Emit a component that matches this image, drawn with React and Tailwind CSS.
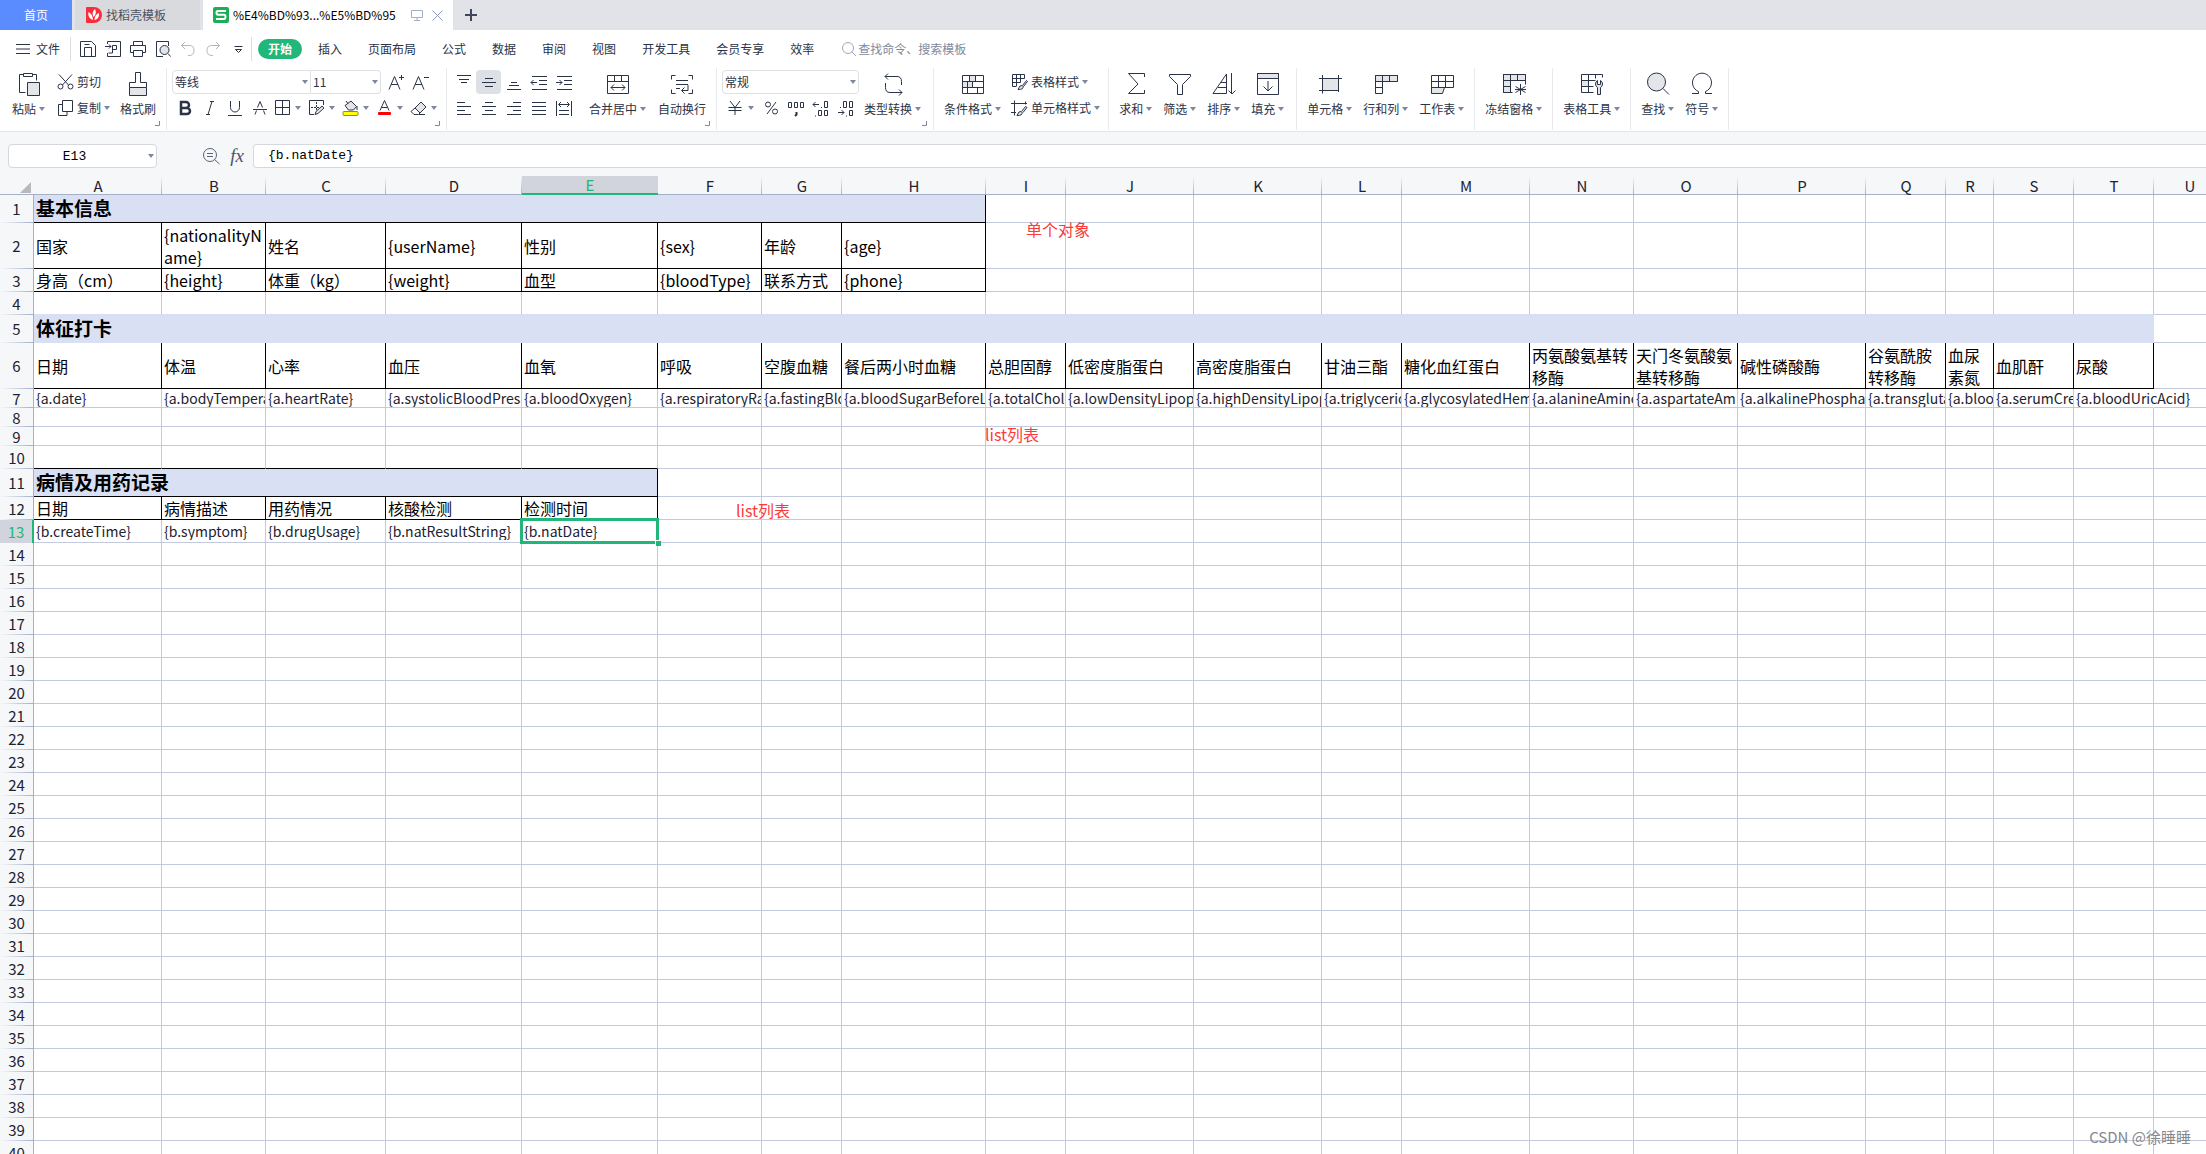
import React, { useState } from 'react';
import clsx from 'clsx';

// ---------- Icons ----------

const Svg = ({ w = 16, h = w, children }) => (
  <svg width={w} height={h} viewBox={`0 0 ${w} ${h}`} fill="none" stroke="#2b3346" strokeWidth="1" className="shrink-0" aria-hidden="true">
    {children}
  </svg>
);

const Caret = ({ className }) => (
  <svg width="6" height="4" viewBox="0 0 6 4" className={clsx('shrink-0 fill-[#7d879f]', className)} aria-hidden="true">
    <path d="M0 0h6L3 4z" />
  </svg>
);

const Launcher = () => (
  <svg width="5" height="5" viewBox="0 0 5 5" fill="none" stroke="#7d879f" className="absolute bottom-1 right-1.5" aria-hidden="true">
    <path d="M4.5 0v4.5H0" />
  </svg>
);

const GRAY = '#e4e5e9';

const icons = {
  paste: (
    <Svg w={24}>
      <path d="M8.5 20.5h-6v-18h4M15.500 2.500h4v6M6.500 1.500h9v3h-9z" />
      <path d="M10.500 10.500h12v13h-12z" fill={GRAY} />
    </Svg>
  ),
  cut: (
    <Svg w={17} h={16}>
      <path d="M2 0.500l9.500 10.500M15 0.500L5.500 11" />
      <circle cx="3.500" cy="12.500" r="2.500" />
      <circle cx="13.500" cy="12.500" r="2.500" />
    </Svg>
  ),
  copy: (
    <Svg w={17} h={16}>
      <path d="M5.500 0.500h10v11h-10z" />
      <path d="M5.500 4.500h-4v11h8.500v-4" />
    </Svg>
  ),
  brush: (
    <Svg w={24}>
      <path d="M3.500 15.500h17v8h-17z" fill={GRAY} />
      <path d="M3.500 15.500v-5h6v-10h5v10h6v5" />
    </Svg>
  ),
  merge: (
    <Svg w={24}>
      <path d="M1.500 3.500h21v18h-21zM1.500 9.500h21M8.500 3.500v6M15.500 3.500v6M5 15.500h14M8 12.500l-3 3 3 3M16 12.500l3 3-3 3" />
    </Svg>
  ),
  wrap: (
    <Svg w={24}>
      <path d="M5.500 3.500h-4v4M18.500 3.500h4v4M5.500 21.500h-4v-4M18.500 21.500h4v-4M6 8.500h12M6 12.500h12M6 16.500h4M18 13v5.500h-6M14.500 15.500l-3 3 3 3" />
    </Svg>
  ),
  convert: (
    <Svg w={24}>
      <path d="M4 4.500h12q4.500 0 4.500 5V13M7 1.500l-3 3 3 3M4.500 11v4.500q0 5 4.500 5h12M18 17.500l3 3-3 3" />
    </Svg>
  ),
  condition: (
    <Svg w={24}>
      <path d="M8.500 3.500h6v6h-6zM1.500 9.500h10v6h-10z" fill={GRAY} stroke="none" />
      <path d="M1.500 3.500h21v18h-21zM1.500 9.500h21M1.500 15.500h21M8.500 3.500v6M14.500 3.500v6M6.500 9.500v12M11.500 9.500v6M16.500 15.500v6" />
    </Svg>
  ),
  tableStyle: (
    <Svg w={17} h={17}>
      <path d="M5 12.500H1.500v-12h12v4M1.500 4.500h12M1.500 8.500h8M5.500 0.500v12M9.500 0.500v8" />
      <path d="M7 15.500q2-5 4-4l1 1q1 3-5 3zM11.500 11.500l4-5 1 1-4 5" fill={GRAY} />
    </Svg>
  ),
  cellStyle: (
    <Svg w={17} h={17}>
      <path d="M0 3.500h16M3.500 0.500v15M0 12.500h5M14.500 1.500v3" />
      <path d="M6 15.500q2-5 4-4l1 1q1 3-5 3zM10.500 11.500l4-5 1.500 1-4 5" fill={GRAY} />
    </Svg>
  ),
  sum: (
    <Svg w={24}>
      <path d="M20.500 5v-3.500h-16L14 12 4.500 21.500h16V18" />
    </Svg>
  ),
  filter: (
    <Svg w={24}>
      <path d="M1.500 2.500h21v2l-8 8v10h-5v-10l-8-8z" />
    </Svg>
  ),
  sort: (
    <Svg w={24}>
      <path d="M14.500 2v19.500M1 21.500L14.500 2M9 10.500h5.500M6 15.500h8.500M1 21.500h13.500M19.500 1v21M16.500 18.500l3.500 3.500 3.500-3.500" />
    </Svg>
  ),
  fill: (
    <Svg w={24}>
      <path d="M1.500 1.500h21v5h-21z" fill={GRAY} />
      <path d="M1.500 1.500h21v21h-21zM12 9v10M7.500 14.500L12 19l4.500-4.500" />
    </Svg>
  ),
  cell: (
    <Svg w={24}>
      <path d="M4.500 6.500h16v12h-16z" fill={GRAY} />
      <path d="M1 6.500h23M1 18.500h16M4.500 3v18.500M20.500 3v12.500M20.500 17.500v2.500" />
    </Svg>
  ),
  rowCol: (
    <Svg w={24}>
      <path d="M1.500 3.500h22v6h-22z" fill={GRAY} />
      <path d="M1.500 3.500h22v6h-15v12h-7zM8.500 3.500v6h-7M15.500 3.500v6M1.500 15.500h7" />
    </Svg>
  ),
  sheet: (
    <Svg w={24}>
      <path d="M1.500 15.500h13l-2 6h-11z" fill={GRAY} />
      <path d="M1.500 3.500h22v12h-22zM1.500 9.500h22M8.500 3.500v12M15.500 3.500v12" />
    </Svg>
  ),
  freeze: (
    <Svg w={24}>
      <path d="M1.500 2.500h22v6h-15v12h-7z" fill={GRAY} />
      <path d="M1.500 2.500h22v10M1.500 8.500h22M8.500 2.500v18H1.500v-18M15.500 2.500v6M1.500 14.500h7M8.500 20.500h2M18.500 12v11M13.500 14.500l10 6M23.500 14.500l-10 6M13 17.500h11" />
    </Svg>
  ),
  tableTool: (
    <Svg w={24}>
      <path d="M1.500 8.500h7v6h-7z" fill={GRAY} />
      <path d="M22.500 5.500v-3h-21v18h12M1.500 8.500h14M1.500 14.500h12M8.500 2.500v18M15.500 2.500v4" />
      <path d="M17.500 22.500v-7q-2-1-2-3.500t2-3.500v4h3v-4q2 1 2 3.500t-2 3.500v7z" fill={GRAY} />
    </Svg>
  ),
  find: (
    <Svg w={24}>
      <circle cx="10.500" cy="10" r="9" fill={GRAY} />
      <path d="M17 16.500l6 6" />
    </Svg>
  ),
  symbol: (
    <Svg w={24}>
      <path d="M2 21.500h6.500v-2A9.500 9.500 0 1 1 15.500 19.500v2H22" />
    </Svg>
  ),
};

const fontIcons = {
  borders: (
    <Svg w={17} h={16}>
      <path d="M1.500 0.500h14v14h-14zM8.500 0.500v14M1.500 7.500h14" />
    </Svg>
  ),
  drawBorder: (
    <Svg w={17} h={16}>
      <path d="M15.500 5v-4.500h-14v14H6" />
      <path d="M3 7.500h10M8.500 2v10" strokeDasharray="2 1" />
      <path d="M7 14.500l1-3 6-5.500 2 2-6 5.500z" fill={GRAY} />
    </Svg>
  ),
  bucket: (
    <Svg w={17} h={16}>
      <path d="M3 5.500L9 1l5.500 5.500-3 3.500h-5zM6 3.500L4 1" fill={GRAY} />
      <path d="M15 6v4" />
      <rect x="1" y="11.500" width="15" height="4" rx="1" fill="#ffff00" stroke="#8a8a3a" />
    </Svg>
  ),
  fontColor: (
    <Svg w={17} h={16}>
      <path d="M4 10.500L8.500 0.500 13 10.500M5.500 7.500h6" />
      <rect x="2" y="12" width="13" height="3" rx="1" fill="#ff0000" stroke="none" />
    </Svg>
  ),
  eraser: (
    <Svg w={17} h={16}>
      <path d="M5 8l6-6 5 5-6 6z" fill={GRAY} />
      <path d="M5 8l-4 3.500 3 3h4.500L10 13M9 14.500h6" />
    </Svg>
  ),
};

const alignIcons = [
  ['顶端对齐', 'M2 1.500h14M4 5.500h10M6 8.500h6'],
  ['垂直居中', 'M5 4.500h8M2 8.500h14M5 12.500h8'],
  ['底端对齐', 'M6 8.500h6M4 11.500h10M2 15.500h14'],
  ['减少缩进', 'M2 2.500h15M9 6.500h8M9 10.500h8M2 15.500h15M1 8.500h6M3.500 6L1 8.500 3.500 11'],
  ['增加缩进', 'M2 2.500h15M9 6.500h8M9 10.500h8M2 15.500h15M1 8.500h6M4.500 6L7 8.500 4.500 11'],
  ['左对齐', 'M2 2.500h8M2 6.500h14M2 10.500h8M2 14.500h14'],
  ['水平居中', 'M5 2.500h8M2 6.500h14M5 10.500h8M2 14.500h14'],
  ['右对齐', 'M8 2.500h8M2 6.500h14M8 10.500h8M2 14.500h14'],
  ['两端对齐', 'M2 2.500h14M2 6.500h14M2 10.500h14M2 14.500h14'],
  ['分散对齐', 'M1.500 1v15M16.500 1v15M4 4.500h10M6 2L3.500 4.500 6 7M12 2l2.500 2.500L12 7M4 10.500h10M4 14.500h10'],
];

// ---------- Ribbon building blocks ----------

const BigButton = ({ icon, label, caret = true }) => (
  <button className="flex flex-col items-center gap-1">
    {icons[icon]}
    <span className="flex items-center gap-[3px] leading-[18px]">
      {label}
      {caret && <Caret />}
    </span>
  </button>
);

const SmallButton = ({ icon, label, caret = true }) => (
  <button className="flex h-[24px] items-center gap-[3px]">
    {icons[icon]}
    {label}
    {caret && <Caret />}
  </button>
);

const Group = ({ className = 'px-[10px]', launcher, children }) => (
  <div className={clsx('relative flex h-[62px] shrink-0 items-start border-r border-[#e9eaee]', className)}>
    {children}
    {launcher && <Launcher />}
  </div>
);

const Dropdown = ({ label, value, className }) => (
  <div className="relative flex items-center">
    <select aria-label={label} className={clsx('h-[24px] appearance-none border-[#dfe1e6] bg-white pl-[2px] text-[12px]', className)}>
      <option>{value}</option>
    </select>
    <Caret className="pointer-events-none absolute right-[3px]" />
  </div>
);

const TabBar = () => (
  <div className="flex h-[30px] shrink-0 items-stretch gap-[3px] bg-[#e2e3e8] text-[12px]">
    <button className="w-[72px] bg-[#5b8cff] text-white">首页</button>
    <button className="flex w-[125px] items-center gap-1 bg-[#d9dadd] pl-[11px] text-[#4b5263]">
      <svg width="16" height="16" viewBox="0 0 16 16" aria-hidden="true">
        <path d="M1 0h7a8 8 0 0 1 0 16H1a1 1 0 0 1-1-1V1a1 1 0 0 1 1-1z" fill="#fb2c3c" />
        <path d="M7 13C2.500 11.500 2 8 2.500 5 5 6.500 7 9 7 13zM7.500 10C5.800 7 6.500 4 9 2c1.500 3 1 6-1.500 8zM8.500 13c0-3.500 1.500-6 4.500-7 .5 3.500-1 6.300-4.500 7z" fill="#fff" />
      </svg>
      找稻壳模板
    </button>
    <div className="flex w-[250px] items-center bg-white pl-[10px]">
      <svg width="16" height="16" viewBox="0 0 16 16" className="mr-1" aria-hidden="true">
        <rect width="16" height="16" rx="2" fill="#1aae57" />
        <path d="M13 4H5Q3.500 4 3.500 5.800T5 7.700h6Q12.500 7.700 12.500 9.800T11 12H3" fill="none" stroke="#fff" strokeWidth="2" />
      </svg>
      <span className="w-[178px] whitespace-nowrap text-black">%E4%BD%93...%E5%BD%95</span>
      <svg width="12" height="12" viewBox="0 0 12 12" fill="none" stroke="#a3aec8" aria-hidden="true">
        <path d="M.5 1.500h11v7H.5zM6 8.500v3M3 11.500h6" />
      </svg>
      <button aria-label="关闭" className="ml-[9px]">
        <svg width="11" height="11" viewBox="0 0 11 11" fill="none" stroke="#8f9bb8">
          <path d="M.5.5l10 10M10.500.5l-10 10" />
        </svg>
      </button>
    </div>
    <button aria-label="新建" className="ml-[9px]">
      <svg width="12" height="12" viewBox="0 0 12 12" stroke="#3f475c" strokeWidth="2">
        <path d="M6 0v12M0 6h12" />
      </svg>
    </button>
  </div>
);

const menus = ['开始', '插入', '页面布局', '公式', '数据', '审阅', '视图', '开发工具', '会员专享', '效率'];

const quickTools = [
  ['保存', <path d="M.5.5h11l4 4v11H.5zM4.500 15v-8.500h7V15M4.500 3.500h5" />],
  ['输出为PDF', <path d="M2.500 3V.5h13v15h-13V12M0 5.500h6M4 3.500l2 2-2 2M7.500 4.500h4v4h-4zM7.500 8v4h-4" />],
  ['打印', <path d="M3.500 4.500v-4h9v4M3.500 11.500h-3v-7h15v7h-3M3.500 9.500h9v6h-9z" />],
  ['打印预览', <><path d="M8 15.500H1.500V.5h12V5M13 12.500l2.500 3" /><circle cx="9.500" cy="9" r="4.500" fill={GRAY} /></>],
  ['撤销', <path d="M5 1L1.500 4.500 5 8M1.500 4.500h8q4.500 0 4.500 5t-5 5H8" stroke="#b4b6bb" />],
  ['恢复', <path d="M11 1l3.500 3.500L11 8M14.500 4.500h-8q-4.500 0-4.500 5t5 5h1" stroke="#b4b6bb" />],
  ['更多', <path d="M4.500 5.500h8M5.500 8.500h6l-3 3z" />],
];

const MenuBar = () => {
  const [active, setActive] = useState('开始');
  return (
    <div className="flex h-[38px] shrink-0 items-center text-[12px]">
      <button className="flex items-center gap-[6px] pl-4 pr-[10px]">
        <svg width="14" height="10" viewBox="0 0 14 10" stroke="#2b3346" aria-hidden="true">
          <path d="M0 .5h14M0 5h14M0 9.500h14" />
        </svg>
        文件
      </button>
      <div className="flex h-6 items-center gap-[9px] border-x border-[#dcdee4] pl-[9px] pr-[5px]">
        {quickTools.map(([label, path]) => (
          <button key={label} aria-label={label}>
            <Svg w={16}>{path}</Svg>
          </button>
        ))}
      </div>
      <nav className="ml-[6px] flex gap-[6px]">
        {menus.map((m) => (
          <button
            key={m}
            onClick={() => setActive(m)}
            className={clsx('h-5 rounded-full px-[10px]', active === m && 'bg-[#21b77b] font-bold text-white')}
          >
            {m}
          </button>
        ))}
      </nav>
      <label className="ml-[18px] flex items-center gap-[2px]">
        <svg width="14" height="14" viewBox="0 0 14 14" fill="none" stroke="#a0a8bd" aria-hidden="true">
          <circle cx="6" cy="6" r="5.500" />
          <path d="M10 10l4 4" />
        </svg>
        <input aria-label="查找命令" placeholder="查找命令、搜索模板" className="w-[140px] outline-none placeholder:text-[#8089a0]" />
      </label>
    </div>
  );
};

const Ribbon = () => (
  <div className="flex h-[64px] shrink-0 items-start border-b border-[#e3e5e9] text-[12px] leading-[18px]">
    <Group launcher className="pr-[10px] pl-[12px]">
      <div className="flex pt-1">
        <BigButton icon="paste" label="粘贴" />
      </div>
      <div className="ml-[12px] mr-[10px] flex flex-col gap-[2px] pt-[2px]">
        <SmallButton icon="cut" label="剪切" caret={false} />
        <SmallButton icon="copy" label="复制" />
      </div>
      <div className="flex pt-1">
        <BigButton icon="brush" label="格式刷" caret={false} />
      </div>
    </Group>

    <Group launcher className="flex-col gap-[2px] pt-[2px] pr-[4px] pl-[5px]">
      <div className="flex items-center">
        <Dropdown label="字体" value="等线" className="w-[139px] rounded-l-sm border" />
        <Dropdown label="字号" value="11" className="w-[70px] rounded-r-sm border-y border-r" />
        <button aria-label="增大字号" className="ml-[3px] flex w-[24px] justify-center">
          <Svg w={17} h={17}>
            <path d="M1 15.500L6.500 2.500 12 15.500M3 10.500h7M11 3.500h5M13.500 1v5" />
          </Svg>
        </button>
        <button aria-label="减小字号" className="flex w-[24px] justify-center">
          <Svg w={17} h={17}>
            <path d="M1 15.500L6.500 2.500 12 15.500M3 10.500h7M12 3.500h5" />
          </Svg>
        </button>
      </div>
      <div className="flex h-[24px] items-center">
        <button aria-label="加粗" className="flex w-[25px] justify-center">
          <Svg w={16}>
            <path d="M4 2h5a3 3 0 0 1 0 6H4zM4 8h6a3 3 0 0 1 0 6H4z" strokeWidth="2.500" />
          </Svg>
        </button>
        <button aria-label="倾斜" className="flex w-[25px] justify-center">
          <Svg w={16}>
            <path d="M8 1.500h4M4 14.500h4M10 1.500l-4 13" />
          </Svg>
        </button>
        <button aria-label="下划线" className="flex w-[25px] justify-center">
          <Svg w={16}>
            <path d="M3.500 1v6.500a4.500 4.500 0 0 0 9 0V1M1 15.500h14" />
          </Svg>
        </button>
        <button aria-label="删除线" className="flex w-[25px] justify-center">
          <Svg w={16}>
            <path d="M3 14.500l1.500-4M5.500 7.500l2.500-6 2.500 6M11.500 10.500l1.500 4M1 9.500h14" />
          </Svg>
        </button>
        {[['边框', 'borders'], ['绘制边框', 'drawBorder'], ['填充颜色', 'bucket'], ['字体颜色', 'fontColor'], ['清除', 'eraser']].map(([label, icon]) => (
          <button key={icon} aria-label={label} className="flex w-[34px] items-center gap-[4px] pl-[2px]">
            {fontIcons[icon]}
            <Caret />
          </button>
        ))}
      </div>
    </Group>

    <Group launcher className="pr-[10px] pl-[4px]">
      <div className="mr-[13px] grid grid-cols-5 gap-y-[2px] pt-[2px]">
        {alignIcons.map(([label, d], i) => (
          <button key={label} aria-label={label} className={clsx('flex h-[24px] w-[25px] items-center justify-center rounded-sm', i === 1 && 'bg-[#dde1e6]')}>
            <Svg w={18} h={17}>
              <path d={d} />
            </Svg>
          </button>
        ))}
      </div>
      <div className="flex gap-3 pt-1">
        <BigButton icon="merge" label="合并居中" />
        <BigButton icon="wrap" label="自动换行" caret={false} />
      </div>
    </Group>

    <Group launcher className="pr-[12px] pl-[5px]">
      <div className="mr-[5px] flex flex-col gap-[2px] pt-[2px]">
        <Dropdown label="数字格式" value="常规" className="w-[137px] rounded-sm border" />
        <div className="flex h-[24px] items-center">
          <button aria-label="货币" className="flex w-[36px] items-center gap-[5px] pl-[5px]">
            <Svg w={16}>
              <path d="M3 1l5 6.500L13 1M8 7.500V15M1.500 7.500h13M1.500 10.500h13" />
            </Svg>
            <Caret />
          </button>
          <button aria-label="百分比" className="flex w-[25px] justify-center">
            <Svg w={16}>
              <circle cx="5" cy="4.500" r="2.500" />
              <circle cx="12" cy="11.500" r="2.500" />
              <path d="M13 2L4 14" />
            </Svg>
          </button>
          <button aria-label="千位分隔" className="flex w-[25px] justify-center">
            <Svg w={18} h={17}>
              <path d="M1.500 2.500h3v5h-3zM7.500 2.500h3v5h-3zM13.500 2.500h3v5h-3z" />
              <path d="M9.500 12v2.500L8 16" strokeWidth="2" />
            </Svg>
          </button>
          <button aria-label="增加小数位" className="flex w-[25px] justify-center">
            <Svg w={18} h={17}>
              <path d="M1 4.500h6M3.500 2L1 4.500 3.500 7M9 7.500h1M12.500 1.500h3v6h-3zM3 16h1M6.500 10.500h3v5h-3zM12.500 10.500h3v5h-3z" />
            </Svg>
          </button>
          <button aria-label="减少小数位" className="flex w-[25px] justify-center">
            <Svg w={18} h={17}>
              <path d="M1 12.500h6M4.500 10L7 12.500 4.500 15M9 16h1M12.500 10.500h3v5h-3zM3 7.500h1M6.500 1.500h3v6h-3zM12.500 1.500h3v6h-3z" />
            </Svg>
          </button>
        </div>
      </div>
      <div className="flex pt-1">
        <BigButton icon="convert" label="类型转换" />
      </div>
    </Group>

    <Group className="gap-[10px] pr-[8px] pl-[10px]">
      <div className="flex pt-1">
        <BigButton icon="condition" label="条件格式" />
      </div>
      <div className="flex flex-col gap-[2px] pt-[2px]">
        <SmallButton icon="tableStyle" label="表格样式" />
        <SmallButton icon="cellStyle" label="单元格样式" />
      </div>
    </Group>

    <Group className="gap-[11px] pt-1 pr-[12px] pl-[10px]">
      <BigButton icon="sum" label="求和" />
      <BigButton icon="filter" label="筛选" />
      <BigButton icon="sort" label="排序" />
      <BigButton icon="fill" label="填充" />
    </Group>
    <Group className="gap-[11px] px-[10px] pt-1">
      <BigButton icon="cell" label="单元格" />
      <BigButton icon="rowCol" label="行和列" />
      <BigButton icon="sheet" label="工作表" />
    </Group>
    <Group className="px-[10px] pt-1">
      <BigButton icon="freeze" label="冻结窗格" />
    </Group>
    <Group className="px-[10px] pt-1">
      <BigButton icon="tableTool" label="表格工具" />
    </Group>
    <Group className="gap-[11px] px-[10px] pt-1">
      <BigButton icon="find" label="查找" />
      <BigButton icon="symbol" label="符号" />
    </Group>
  </div>
);

const FormulaBar = () => (
  <div className="flex h-[44px] shrink-0 items-center bg-[#f5f7f9] pl-2 pt-[4px] font-['Liberation_Mono',monospace] text-[13px] text-black">
    <div className="relative flex items-center">
      <input aria-label="名称框" defaultValue="E13" className="h-[24px] w-[149px] rounded-sm border border-[#d6d8df] bg-white pr-4 text-center" />
      <Caret className="absolute right-[3px]" />
    </div>
    <button aria-label="浏览公式" className="ml-[45px]">
      <svg width="18" height="18" viewBox="0 0 18 18" fill="none" stroke="#5a6378">
        <circle cx="8" cy="8" r="6.500" />
        <path d="M5 6.500h6M5 9.500h6M12.500 12.500l5 4.500" />
      </svg>
    </button>
    <button aria-label="插入函数" className="ml-[8px] w-[18px] font-['Liberation_Serif',serif] text-[19px] leading-6 text-[#4c5469] italic">fx</button>
    <input aria-label="编辑栏" defaultValue="{b.natDate}" className="ml-[7px] h-[24px] min-w-0 flex-1 rounded-l-sm border-y border-l border-[#d6d8df] bg-white pb-[2px] pl-[14px]" />
  </div>
);

// ---------- Sheet ----------

const columns = [
  ['A', 'w-[128px]'], ['B', 'w-[104px]'], ['C', 'w-[120px]'], ['D', 'w-[136px]'], ['E', 'w-[136px]'],
  ['F', 'w-[104px]'], ['G', 'w-[80px]'], ['H', 'w-[144px]'], ['I', 'w-[80px]'], ['J', 'w-[128px]'],
  ['K', 'w-[128px]'], ['L', 'w-[80px]'], ['M', 'w-[128px]'], ['N', 'w-[104px]'], ['O', 'w-[104px]'],
  ['P', 'w-[128px]'], ['Q', 'w-[80px]'], ['R', 'w-[48px]'], ['S', 'w-[80px]'], ['T', 'w-[80px]'], ['U', 'w-[72px]'],
];

// title: merged heading, span = number of merged columns
// boxed: number of cells drawn with black borders
const content = {
  1: { height: 'h-[28px]', title: '基本信息', span: 8, outlined: true },
  2: { height: 'h-[46px]', boxed: 8, cells: ['国家', '{nationalityName}', '姓名', '{userName}', '性别', '{sex}', '年龄', '{age}'] },
  3: { boxed: 8, cells: ['身高（cm）', '{height}', '体重（kg）', '{weight}', '血型', '{bloodType}', '联系方式', '{phone}'] },
  5: { height: 'h-[28px]', title: '体征打卡', span: 20 },
  6: {
    height: 'h-[46px]',
    boxed: 20,
    cells: [
      '日期', '体温', '心率', '血压', '血氧', '呼吸', '空腹血糖', '餐后两小时血糖', '总胆固醇', '低密度脂蛋白',
      '高密度脂蛋白', '甘油三酯', '糖化血红蛋白', '丙氨酸氨基转移酶', '天门冬氨酸氨基转移酶', '碱性磷酸酶',
      '谷氨酰胺转移酶', '血尿素氮', '血肌酐', '尿酸',
    ],
  },
  7: {
    height: 'h-[19px]',
    cells: [
      '{a.date}', '{a.bodyTempera', '{a.heartRate}', '{a.systolicBloodPress', '{a.bloodOxygen}',
      '{a.respiratoryRa', '{a.fastingBlo', '{a.bloodSugarBeforeL', '{a.totalChole',
      '{a.lowDensityLipopr', '{a.highDensityLipop', '{a.triglycerid', '{a.glycosylatedHem',
      '{a.alanineAmino', '{a.aspartateAm', '{a.alkalinePhosphat',
      '{a.transgluta', '{a.bloo', '{a.serumCre', '{a.bloodUricAcid}',
    ],
  },
  8: { height: 'h-[19px]' },
  9: { height: 'h-[19px]' },
  10: { underline: 5 },
  11: { height: 'h-[28px]', title: '病情及用药记录', span: 5, outlined: true },
  12: { boxed: 5, cells: ['日期', '病情描述', '用药情况', '核酸检测', '检测时间'] },
  13: { cells: ['{b.createTime}', '{b.symptom}', '{b.drugUsage}', '{b.natResultString}', '{b.natDate}'] },
};

const rowNumbers = Array.from({ length: 40 }, (_, i) => i + 1);

const Row = ({ n }) => {
  const { height = 'h-[23px]', title, span = 0, outlined, boxed = 0, underline = 0, cells = [] } = content[n] || {};
  const selectedRow = n === 13;
  return (
    <tr className={height}>
      <th
        scope="row"
        className={clsx(
          'bg-no-repeat bg-bottom p-0 font-normal leading-[18px]',
          selectedRow
            ? 'border-r-2 border-[#21b77b] bg-[#d1d4dc] text-[#21b77b]'
            : 'border-r border-[#a6b0cb] bg-[#f5f7f9] bg-[linear-gradient(to_right,transparent,#a6b0cb)] bg-[length:100%_1px]'
        )}
      >
        {n}
      </th>
      {title && (
        <td
          colSpan={span}
          className={clsx(
            'border-r border-b bg-[#dae0f3] p-0 pb-[2px] pl-[2px] text-[19px] leading-[24px] font-bold text-black',
            outlined ? 'border-black' : 'border-[#dae0f3]'
          )}
        >
          {title}
        </td>
      )}
      {columns.slice(span).map(([letter], i) => {
        const col = i + span;
        const text = cells[col];
        const black = col < boxed;
        const selected = selectedRow && letter === 'E';
        const spills = n === 7 && letter === 'T';
        return (
          <td
            key={letter}
            className={clsx(
              'relative border-r p-0',
              black ? 'border-black' : 'border-[#c4cadd]',
              'border-b',
              col < underline && 'border-b-black',
              n === 4 && col < 20 && 'border-b-[#dae0f3]',
              spills && 'border-r-transparent'
            )}
          >
            {text && (
              <div
                className={clsx(
                  'pl-[2px]',
                  black ? 'text-[16px] leading-[22px] break-all text-black' : 'text-[14px] leading-[18px] whitespace-nowrap',
                  !black && !spills && 'overflow-hidden',
                  spills && 'relative z-10'
                )}
              >
                {text}
              </div>
            )}
            {selected && (
              <>
                <span className="absolute -inset-[2px] z-10 border-[3px] border-[#21b77b]" />
                <span className="absolute -right-[4px] -bottom-[4px] z-10 size-[6px] border-t border-l border-white bg-[#21b77b]" />
              </>
            )}
          </td>
        );
      })}
    </tr>
  );
};

const Sheet = () => (
  <div className="relative min-h-0 flex-1 overflow-hidden bg-white font-['Noto_Sans_CJK_SC',sans-serif] text-[15px] text-[#1c2230]">
    <table className="w-[2226px] table-fixed border-separate border-spacing-0">
      <colgroup>
        <col className="w-[34px]" />
        {columns.map(([letter, width]) => (
          <col key={letter} className={width} />
        ))}
      </colgroup>
      <thead>
        <tr className="h-[19px]">
          <td className="border-b border-[#a6b0cb] bg-[#f5f7f9] p-0">
            <svg width="11" height="11" viewBox="0 0 11 11" className="ml-auto mr-[3px] mt-1 fill-[#b7b9bd]" aria-hidden="true">
              <path d="M11 0v11H0z" />
            </svg>
          </td>
          {columns.map(([letter]) => (
            <th
              key={letter}
              scope="col"
              className={clsx(
                'p-0 font-normal',
                letter === 'E'
                  ? 'border-b-2 border-[#21b77b] bg-[#d1d4dc] pt-[1px] leading-[16px] text-[#21b77b]'
                  : 'border-b border-[#a6b0cb] bg-[#f5f7f9] bg-[linear-gradient(to_bottom,transparent,#a6b0cb)] bg-[length:1px_100%] bg-right bg-no-repeat pt-[2px] leading-[16px]'
              )}
            >
              {letter}
            </th>
          ))}
        </tr>
      </thead>
      <tbody>
        {rowNumbers.map((n) => (
          <Row key={n} n={n} />
        ))}
      </tbody>
    </table>

    {/* Notes placed over the sheet */}
    <p className="absolute top-[41px] left-[1026px] text-[16px] leading-6 text-[#fb3b3b]">单个对象</p>
    <p className="absolute top-[246px] left-[985px] text-[16px] leading-6 text-[#fb3b3b]">list列表</p>
    <p className="absolute top-[322px] left-[736px] text-[16px] leading-6 text-[#fb3b3b]">list列表</p>
    <p className="absolute right-[15px] bottom-[5px] text-[15px] leading-6 text-[#85878c]">CSDN @徐睡睡</p>
  </div>
);

const App = () => (
  <div className="flex h-screen flex-col overflow-hidden bg-white font-['Noto_Sans_CJK_SC',sans-serif] text-[#2b3346]">
    <TabBar />
    <MenuBar />
    <Ribbon />
    <FormulaBar />
    <Sheet />
  </div>
);

export default App;
